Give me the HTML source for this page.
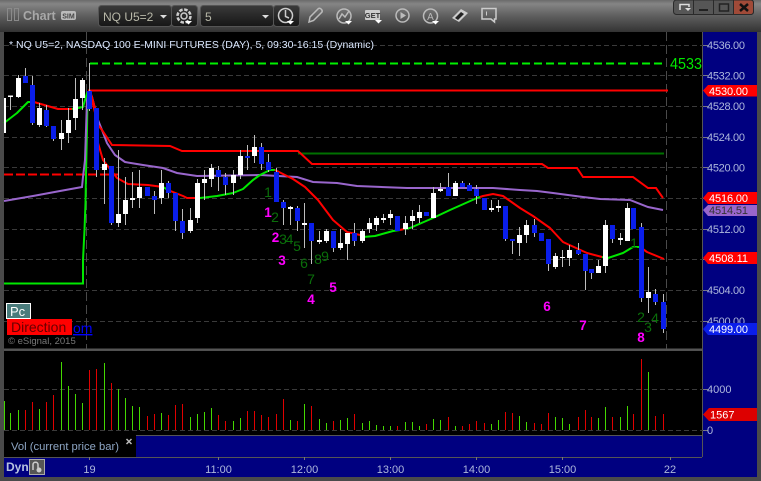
<!DOCTYPE html>
<html><head><meta charset="utf-8"><style>
html,body{margin:0;padding:0;width:761px;height:481px;overflow:hidden;background:#444}
svg{display:block}
text{font-family:"Liberation Sans",sans-serif}
</style></head><body>
<svg width="761" height="481" viewBox="0 0 761 481" xmlns="http://www.w3.org/2000/svg">
<defs><linearGradient id="t" x1="0" y1="0" x2="0" y2="1"><stop offset="0" stop-color="#6b6b6b"/><stop offset=".12" stop-color="#858585"/><stop offset=".5" stop-color="#5e5e5e"/><stop offset="1" stop-color="#333"/></linearGradient>
<linearGradient id="b" x1="0" y1="0" x2="0" y2="1"><stop offset="0" stop-color="#3a3a3a"/><stop offset="1" stop-color="#161616"/></linearGradient></defs>
<rect width="761" height="481" fill="#4a4a4a"/>
<rect width="761" height="32" fill="url(#t)"/>
<rect x="4" y="32" width="698" height="317" fill="#000"/>
<rect x="4" y="351" width="698" height="84" fill="#000"/>
<rect x="703" y="32" width="54" height="445" fill="#000080"/>
<rect x="4" y="457" width="699" height="20" fill="#000080"/>
<rect x="136" y="436" width="567" height="21" fill="#000080"/>
<rect x="4" y="435" width="132" height="22" fill="#000"/>
<path d="M702.5 32V457M4 349.5H702M136 435.5H702M4 457.5H702" stroke="#555" fill="none"/>
<path d="M4 349.5H702" stroke="#555" stroke-width="2"/>

<!-- grid -->
<path d="M4 45.5H704M4 75.5H704M4 106.5H704M4 137.5H704M4 167.5H704M4 198.5H704M4 229.5H704M4 259.5H704M4 290.5H704M4 321.5H704M4 389.5H704M4 430.5H704" stroke="#3a3a3a" stroke-dasharray="5 3" fill="none"/>
<path d="M86.5 32V349M666.5 32V349" stroke="#4a4a4a" stroke-dasharray="9 4" fill="none"/>

<!-- levels -->
<path d="M90 63.5H664" stroke="#00f000" stroke-width="2" stroke-dasharray="8 4" fill="none"/>
<path d="M88 90.5H668" stroke="#f00" stroke-width="2" fill="none"/>
<path d="M298 153.5H664" stroke="#007000" stroke-width="2" fill="none"/>
<path d="M4 174.5H119" stroke="#f00" stroke-width="2" stroke-dasharray="9 3" fill="none"/>
<path d="M4 283.5H83V260L84.5 230L85.5 203L86 173L87 130L87.5 100L89 92" stroke="#00e800" stroke-width="2" fill="none"/>
<path d="M4 201L33 196L60 191L82 187L83 177L85 160L86 130L87 100L90 92L92 97L98 120L102 130L107 143L115 155L125 162L143 165L163 168L177 173L197 176L260 175L297 177L313 182L337 183L357 186L407 188L460 188L493 188L520 190L537 191L553 193L583 197L600 199L630 200L648 207L663 210" stroke="#9966cc" stroke-width="2" fill="none"/>
<path d="M90 92L98 125L102 130L112 145L170 146L182 151H298L312 164H542L548 168H577L583 177H633L648 188H656L663 198" stroke="#f00" stroke-width="2" fill="none"/>
<!-- MA segments -->
<g fill="none" stroke-width="2" stroke-linejoin="round">
<path stroke="#00e800" d="M4 123L17 113L28 102L34 102M72 109L78 108L83 107L87 93L90 92M163 187L168 190M200 198L217 196L233 193L243 189L253 180L260 175L270 170L275 170M360 235L363 237L375 236L393 231L400 230M404 229L410 228L433 218L450 210L477 198L480 197M602 257L608 258L623 253L633 247L640 247"/>
<path stroke="#f00" d="M34 102L58 109L72 109M90 92L92 97L98 120L98 143L103 160L117 178L128 184L148 185L163 187M168 190L183 196L187 198L200 198M275 170L293 179L305 187L318 200L333 220L347 232L360 235M400 230L404 229M480 197L483 196L493 194L503 196L520 208L533 216L550 228L563 242L587 253L602 257M640 247L647 252L664 259"/>
</g>

<!-- wicks -->
<path fill="none" stroke="#bdbdbd" d="M10.5 97V110M18.5 75V98M25.5 68V76M32.5 76V125M39.5 103V127M46.5 105V127M53.5 126V141M61.5 120V150M68.5 108V143M75.5 78V130M82.5 78V110M89.5 63V111M96.5 108V177M104.5 158V204M111.5 166V225M118.5 150V227M125.5 177V225M132.5 172V208M139.5 170V208M147.5 187V196M154.5 191V214M161.5 170V204M168.5 181V198M175.5 193V231M182.5 209V239M190.5 208V233M197.5 179V223M204.5 170V200M211.5 164V187M218.5 166V191M225.5 173V195M233.5 170V195M240.5 150V179M247.5 145V170M254.5 135V163M261.5 143V170M268.5 154V172M276.5 168V202M283.5 200V225M290.5 206V225M297.5 206V231M304.5 203V248M311.5 223V264M319.5 231V244M326.5 229V243M333.5 231V252M340.5 229V250M347.5 233V260M354.5 223V246M362.5 229V243M369.5 218V233M376.5 216V231M383.5 214V223M390.5 210V225M397.5 216V231M405.5 216V235M412.5 210V229M419.5 205V223M426.5 212V216M433.5 187V218M440.5 183V192M448.5 173V196M455.5 181V196M462.5 181V187M469.5 183V191M476.5 185V204M484.5 198V210M491.5 200V212M498.5 200V212M505.5 206V241M512.5 239V254M519.5 227V256M526.5 220V243M534.5 219V237M541.5 233V241M548.5 239V271M555.5 253V269M562.5 250V267M569.5 245V266M578.5 243V255M585.5 254V290M591.5 269V279M598.5 260V273M605.5 220V273M612.5 225V243M620.5 233V245M627.5 203V241M633.5 208V229M641.5 223V302M648.5 267V313M655.5 289V305M663.5 294V333"/>
<!-- white bodies -->
<rect x="4" y="98" width="2" height="35" fill="#fff"/>
<path fill="none" stroke="#fff" stroke-width="5" d="M10.5 95.5V97M18.5 78V97M39.5 108V125M61.5 133V139M68.5 120V133M75.5 99V118M82.5 80V98M104.5 164V170M118.5 214V223M125.5 200V214M132.5 198V200M139.5 187V198M161.5 183V198M190.5 220V231M197.5 183V218M204.5 179V183M211.5 168V179M233.5 175V183M240.5 156V175M254.5 147V156M290.5 207V209M304.5 223V225M319.5 240V242M326.5 231V241M340.5 243V248M347.5 233V244M362.5 231V241M369.5 223V229M376.5 218V225M383.5 218V220M390.5 214V218M405.5 223V229M412.5 216V221M419.5 212V218M433.5 193V218M440.5 189V191M455.5 183V196M491.5 208V210M498.5 206V208M519.5 235V243M526.5 225V235M555.5 256V267M562.5 257V258M569.5 250V258M598.5 266V273M605.5 225V266M620.5 238V240M627.5 208V241M648.5 292V298"/>
<!-- blue bodies -->
<path fill="none" stroke="#0a1eea" stroke-width="5" d="M25.5 76V83M32.5 85V123M46.5 110V126M53.5 126V139M89.5 91V109M96.5 108V170M111.5 166V223M147.5 187V196M154.5 196V200M168.5 183V193M175.5 193V221M182.5 221V233M218.5 170V177M225.5 177V185M247.5 156V158M261.5 147V164M268.5 162V170M276.5 172V202M283.5 202V208M297.5 208V221M311.5 223V241M333.5 231V248M354.5 233V241M397.5 216V231M426.5 212V216M448.5 187V196M462.5 183V187M469.5 185V191M476.5 189V196M484.5 198V210M505.5 206V239M512.5 239V241M534.5 225V233M541.5 233V241M548.5 239V264M578.5 250V254M585.5 254V271M591.5 269V273M612.5 225V239M633.5 208V229M641.5 227V298M655.5 294V302M663.5 302V329"/>

<!-- wave counts -->
<g font-size="14" text-anchor="middle" fill="#0a6e0a">
<text x="268" y="197">1</text><text x="275" y="222">2</text><text x="283" y="244">3</text><text x="289.500" y="244">4</text><text x="297" y="251">5</text><text x="304" y="268">6</text><text x="311" y="284">7</text><text x="318" y="264">8</text><text x="325" y="261">9</text><text x="634" y="248">1</text><text x="641" y="322">2</text><text x="648" y="332">3</text><text x="655" y="323">4</text>
</g>
<g font-size="13.500" font-weight="bold" text-anchor="middle" fill="#ff00ff">
<text x="268" y="217">1</text><text x="275.500" y="242">2</text><text x="282" y="265">3</text><text x="311" y="304">4</text><text x="333" y="292">5</text><text x="547" y="311">6</text><text x="583" y="330">7</text><text x="641" y="342">8</text>
</g>

<!-- header text -->
<text x="9" y="48" font-size="10.500" fill="#dbe8ff" textLength="365" lengthAdjust="spacingAndGlyphs">* NQ U5=2, NASDAQ 100 E-MINI FUTURES (DAY), 5, 09:30-16:15 (Dynamic)</text>
<text x="670" y="69" font-size="16" fill="#00e800" textLength="32" lengthAdjust="spacingAndGlyphs">4533</text>

<!-- Pc / Direction -->
<rect x="6.500" y="303.500" width="24" height="15" fill="#4a7c7c" stroke="#fff"/>
<text x="10" y="316" font-size="13" fill="#fff">Pc</text>
<rect x="7" y="319" width="65" height="16" fill="#f00"/>
<text x="11" y="332" font-size="14" fill="#600">Direction</text>
<text x="73" y="333" font-size="14" fill="#00f" text-decoration="underline">om</text>
<text x="8" y="344" font-size="9.500" fill="#777">© eSignal, 2015</text>

<!-- volume -->
<path fill="none" stroke="#44d800" d="M4.500 430V401M10.500 430V413M18.500 430V410M39.500 430V409M61.500 430V362M68.500 430V386M75.500 430V394M82.500 430V403M104.500 430V363M118.500 430V389M125.500 430V398M132.500 430V406M139.500 430V407M161.500 430V413M190.500 430V417M197.500 430V414M204.500 430V412M211.500 430V408M233.500 430V421M240.500 430V418M290.500 430V420M304.500 430V404M319.500 430V419M326.500 430V423M340.500 430V420M347.500 430V418M362.500 430V423M369.500 430V421M376.500 430V425M383.500 430V426M390.500 430V426M405.500 430V422M412.500 430V422M419.500 430V426M433.500 430V419M440.500 430V420M455.500 430V426M491.500 430V424M498.500 430V420M519.500 430V416M526.500 430V422M555.500 430V417M562.500 430V418M569.500 430V424M598.500 430V418M605.500 430V407M620.500 430V417M627.500 430V406M648.500 430V372"/>
<path fill="none" stroke="#e00000" d="M25.500 430V410M32.500 430V402M46.500 430V402M53.500 430V395M89.500 430V370M96.500 430V369M111.500 430V383M147.500 430V416M154.500 430V414M168.500 430V415M175.500 430V405M182.500 430V404M218.500 430V415M225.500 430V421M247.500 430V411M254.500 430V411M261.500 430V415M268.500 430V417M276.500 430V414M283.500 430V399M297.500 430V421M311.500 430V406M333.500 430V421M354.500 430V414M397.500 430V426M426.500 430V424M448.500 430V417M462.500 430V426M469.500 430V424M476.500 430V421M484.500 430V423M505.500 430V412M512.500 430V413M534.500 430V423M541.500 430V424M548.500 430V413M578.500 430V417M585.500 430V410M591.500 430V417M612.500 430V417M633.500 430V414M641.500 430V359M655.500 430V416M663.500 430V414"/>
<text x="11" y="450" font-size="11" fill="#8ea6c4" textLength="108" lengthAdjust="spacingAndGlyphs">Vol (current price bar)</text>
<path d="M126.500 439L131.500 444M131.500 439L126.500 444" stroke="#bbb" stroke-width="1.500" fill="none"/>

<!-- time axis -->
<path d="M89.500 457V460M218.500 457V460M304.500 457V460M390.500 457V460M476.500 457V460M562.500 457V460M670.500 457V460" stroke="#777" fill="none"/>
<g font-size="11" fill="#aeb8dc" text-anchor="middle">
<text x="89.500" y="473">19</text><text x="218.500" y="473">11:00</text><text x="304.500" y="473">12:00</text><text x="390.500" y="473">13:00</text><text x="476.500" y="473">14:00</text><text x="562.500" y="473">15:00</text><text x="670" y="473">22</text>
</g>
<text x="6" y="471" font-size="12" font-weight="bold" fill="#b8c4e0">Dyn</text>
<rect x="29.500" y="459.500" width="15" height="15" fill="#555" stroke="#aaa"/>
<path d="M33 470V464.500C33 461.500 38 461.500 38 464.500V468" stroke="#ccc" stroke-width="1.500" fill="none"/><circle cx="39" cy="470" r="2.500" fill="#ccc"/>

<!-- price axis -->
<path d="M703 45.500H708M703 75.500H708M703 106.500H708M703 137.500H708M703 167.500H708M703 198.500H708M703 229.500H708M703 259.500H708M703 290.500H708M703 321.500H708M703 389.500H708M703 430.500H708" stroke="#778" fill="none"/>
<g font-size="11" fill="#aeb8dc">
<text x="707" y="49" textLength="38">4536.00</text><text x="707" y="79.500" textLength="38">4532.00</text><text x="707" y="110" textLength="38">4528.00</text><text x="707" y="141" textLength="38">4524.00</text><text x="707" y="171.500" textLength="38">4520.00</text><text x="707" y="233" textLength="38">4512.00</text><text x="707" y="294" textLength="38">4504.00</text><text x="707" y="325" textLength="38">4500.00</text><text x="707" y="393">4000</text><text x="707" y="434">0</text>
</g>
<path fill="#f00" d="M703 90.500L708 85H757V96.500H708Z"/><path fill="#f00" d="M703 198L708 192H757V204H708Z"/>
<path fill="#9966cc" d="M703 210L708 205H757V216H708Z"/>
<path fill="#f00" d="M703 258L708 252H757V264H708Z"/>
<path fill="#0a1eea" d="M703 329L708 323H757V335H708Z"/>
<path fill="#dd0000" d="M703 414.500L709 408H757V421H709Z"/>
<g font-size="11" fill="#fff">
<text x="709" y="95" textLength="39">4530.00</text><text x="709" y="202" textLength="39">4516.00</text><text x="709" y="262" textLength="39">4508.11</text><text x="709" y="333" textLength="39">4499.00</text><text x="710" y="418.500">1567</text>
</g>
<text x="709" y="214" font-size="11" fill="#333" textLength="39">4514.51</text>

<!-- title bar -->
<rect x="7.500" y="8.500" width="4" height="12" fill="none" stroke="#8a8a8a"/>
<rect x="14.500" y="8.500" width="4" height="12" fill="none" stroke="#8a8a8a"/>
<text x="23" y="20" font-size="12.500" font-weight="bold" fill="#a8a8a8">Chart</text>
<rect x="61" y="11" width="15" height="9" rx="2" fill="#bbb"/>
<text x="68.500" y="18.500" font-size="7" font-weight="bold" fill="#444" text-anchor="middle">SIM</text>

<rect x="98.500" y="5.500" width="73" height="21" rx="3" fill="url(#b)" stroke="#555"/>
<rect x="171.500" y="5.500" width="26" height="21" rx="3" fill="url(#b)" stroke="#555"/>
<rect x="200.500" y="5.500" width="73" height="21" rx="3" fill="url(#b)" stroke="#555"/>
<rect x="273.500" y="5.500" width="26" height="21" rx="3" fill="url(#b)" stroke="#555"/>
<text x="103" y="21" font-size="12" fill="#b8b8a8">NQ U5=2</text>
<text x="205" y="21" font-size="12" fill="#b8b8a8">5</text>
<path d="M160 15H167L163.500 18.500Z" fill="#ddd"/><path d="M262 15H269L265.500 18.500Z" fill="#ddd"/>
<!-- gear -->
<circle cx="184" cy="16" r="6.500" fill="none" stroke="#ccc" stroke-width="2.500" stroke-dasharray="3.500 1.600"/>
<circle cx="184" cy="16" r="3" fill="none" stroke="#ccc" stroke-width="1.500"/>
<path d="M185 21H192L188.500 24.500Z" fill="#fff"/>
<!-- clock -->
<circle cx="285.500" cy="15.500" r="7" fill="none" stroke="#ccc" stroke-width="1.500"/>
<path d="M285.500 10V16.500L289 18" stroke="#ccc" stroke-width="1.500" fill="none"/>
<path d="M287 21H294L290.500 24.500Z" fill="#fff"/>
<!-- pencil -->
<path d="M309 22L310 17L318.500 8.500C320 7.500 323 10 322 12L313.500 20.500Z" fill="none" stroke="#bbb" stroke-width="1.500"/>
<!-- chart icon -->
<circle cx="344" cy="16" r="7" fill="none" stroke="#bbb" stroke-width="1.500"/>
<path d="M339 19L342 14L345 17L349 11" stroke="#bbb" stroke-width="1.500" fill="none"/>
<path d="M345 21H352L348.500 24.500Z" fill="#fff"/>
<!-- GET -->
<rect x="365" y="10" width="15" height="10" rx="1" fill="#ccc"/>
<text x="372.500" y="18" font-size="7.500" font-weight="bold" fill="#333" text-anchor="middle">GET</text>
<path d="M375 20H382L378.500 23.500Z" fill="#fff"/>
<!-- play -->
<circle cx="402.500" cy="15.500" r="6.500" fill="none" stroke="#bbb" stroke-width="1.500"/>
<path d="M400.500 12L406 15.500L400.500 19Z" fill="#bbb"/>
<!-- A -->
<circle cx="430.500" cy="16" r="7" fill="none" stroke="#bbb" stroke-width="1.500"/>
<text x="430.500" y="20" font-size="10" fill="#bbb" text-anchor="middle">A</text>
<path d="M432 21H439L435.500 24.500Z" fill="#fff"/>
<!-- eraser/diamond -->
<path d="M452 18L461 9L468 13L459 22Z" fill="#ccc"/><path d="M455 18L461 12L464 14L458 20Z" fill="#222"/>
<!-- message -->
<path d="M482 8.500H496V19H494.500V22L491 19H482Z" fill="none" stroke="#ccc" stroke-width="1.500"/><path d="M486.500 11.500V15.500" stroke="#ccc"/>

<!-- window buttons -->
<rect x="673.500" y="0" width="80" height="14.500" rx="3" fill="#565656" stroke="#2a2a2a"/>
<path d="M733.500 0H750.500Q753.500 0 753.500 3V11.500Q753.500 14.500 750.500 14.500H733.500Z" fill="#a04a38" stroke="#2a2a2a"/>
<path d="M693.500 0V14M713.500 0V14M733.500 0V14" stroke="#2a2a2a" fill="none"/>
<path d="M680 10V4.500H689V7" stroke="#ddd" stroke-width="1.500" fill="none"/><path d="M685 8H691L688 11Z" fill="#ddd"/>
<rect x="699" y="9" width="9" height="2" fill="#222"/>
<rect x="719.500" y="4" width="9" height="7" fill="none" stroke="#222" stroke-width="1.500"/>
<path d="M740 4L748 11M748 4L740 11" stroke="#111" stroke-width="2.500" fill="none"/>
</svg>
</body></html>
